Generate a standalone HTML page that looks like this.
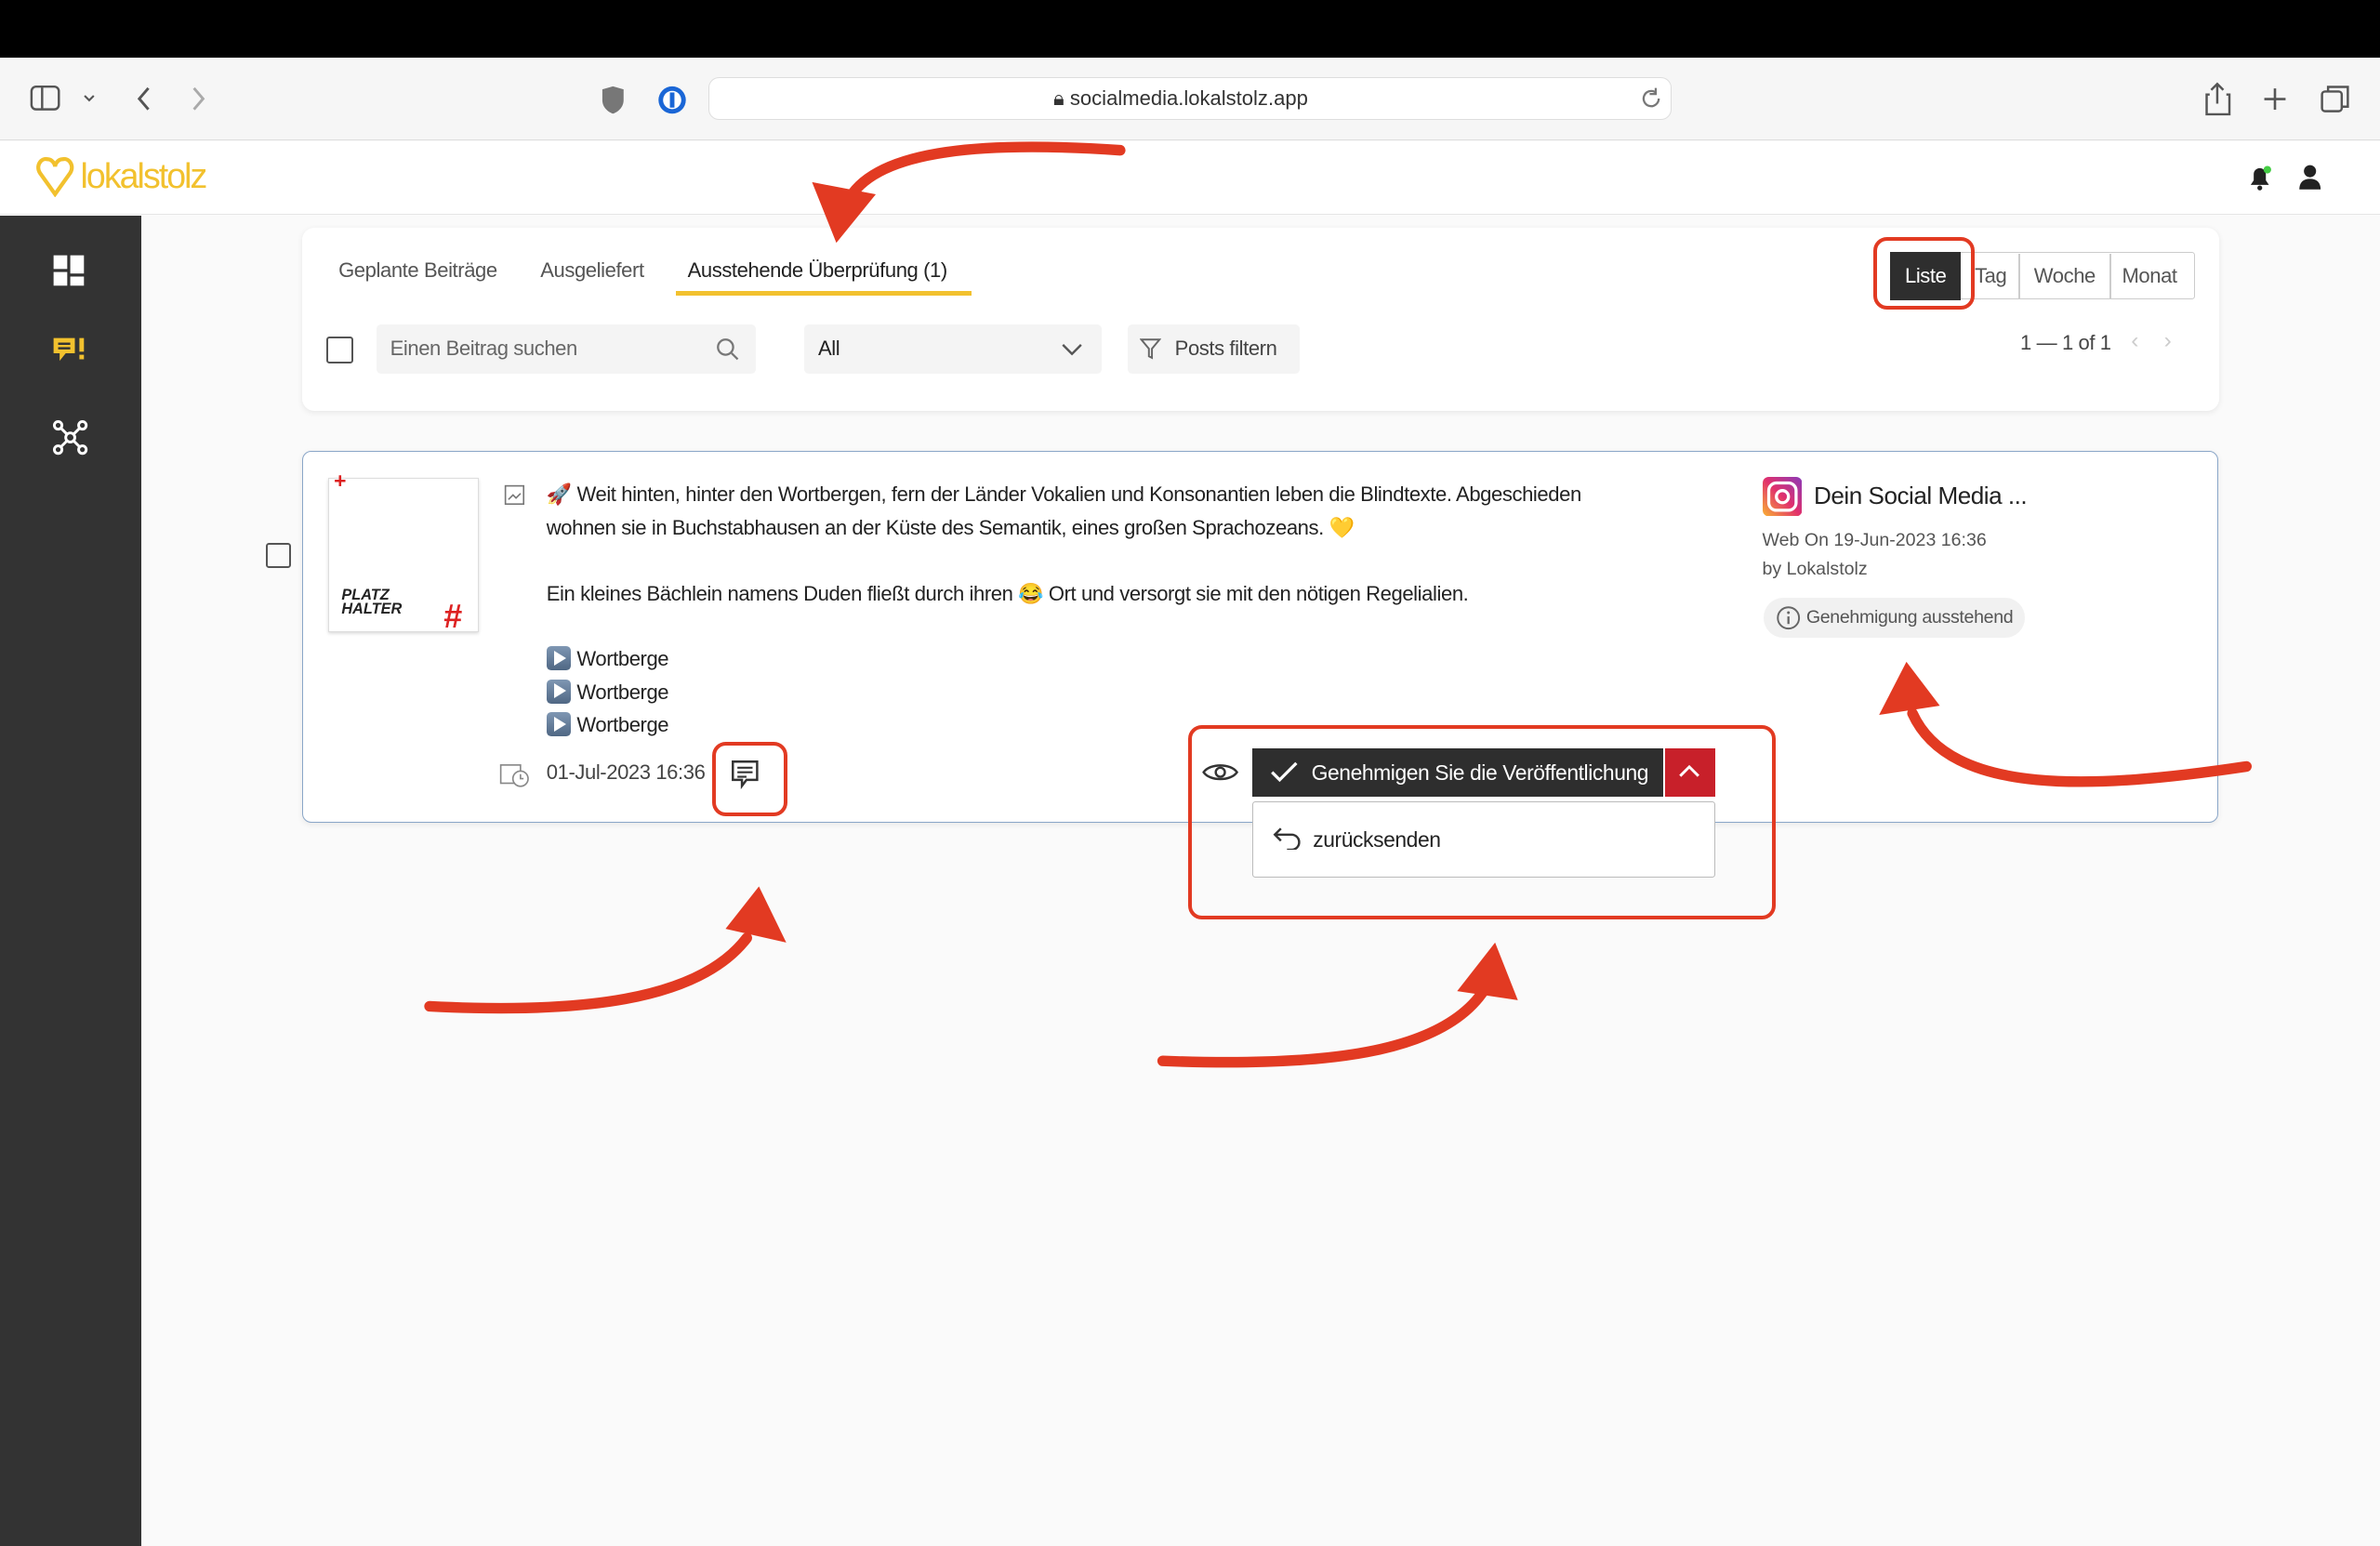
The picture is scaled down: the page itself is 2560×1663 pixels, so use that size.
<!DOCTYPE html>
<html><head><meta charset="utf-8"><style>
html,body{margin:0;padding:0;width:2560px;height:1663px;overflow:hidden;background:#fafafa}
#w{zoom:1.63265;width:1568px;height:1019px;position:relative;font-family:"Liberation Sans",sans-serif;color:#333}
.a{position:absolute}
.t{font-size:13.5px;letter-spacing:-0.25px}
.rb{position:absolute;border:2.5px solid #e23a22;border-radius:9px}
.pl{display:inline-block;width:16px;height:16px;background:linear-gradient(#7f97b3,#4f6784);border-radius:3px;vertical-align:-3px;margin-right:4px;position:relative}
.pl:after{content:"";position:absolute;left:5px;top:3px;border-left:8px solid #fff;border-top:5px solid transparent;border-bottom:5px solid transparent}
</style></head><body><div id="w">
<div class="a" style="left:0;top:0;width:1568px;height:38px;background:#000"></div>
<div class="a" style="left:0;top:38px;width:1568px;height:54px;background:#f6f6f6;border-bottom:1px solid #ddd"></div>
<svg class="a" style="left:18px;top:52px" width="130" height="26"><rect x="3" y="5" width="18" height="15" rx="3" fill="none" stroke="#555" stroke-width="1.5"/><line x1="10" y1="5" x2="10" y2="20" stroke="#555" stroke-width="1.5"/><path d="M38 11l3 3 3-3" fill="none" stroke="#555" stroke-width="1.3"/><path d="M80 6l-6 7 6 7" fill="none" stroke="#555" stroke-width="1.8"/><path d="M110 6l6 7-6 7" fill="none" stroke="#aaa" stroke-width="1.8"/></svg>
<svg class="a" style="left:394px;top:54px" width="60" height="24"><path d="M10 3l7 2v7c0 5-4 8-7 9-3-1-7-4-7-9V5z" fill="#777"/><circle cx="49" cy="12" r="9" fill="#1a66d6"/><circle cx="49" cy="12" r="6" fill="#fff"/><rect x="47.5" y="7" width="3" height="10" fill="#1a66d6"/></svg>
<div class="a" style="left:467px;top:51px;width:633px;height:27px;background:#fff;border:1px solid #ddd;border-radius:7px"></div>
<div class="a" style="left:694px;top:57px;font-size:13.5px;color:#333">🔒︎ socialmedia.lokalstolz.app</div>
<svg class="a" style="left:1080px;top:57px" width="16" height="16"><path d="M13 8a5 5 0 1 1-2-4" fill="none" stroke="#777" stroke-width="1.4"/><path d="M11 1v4h-4" fill="none" stroke="#777" stroke-width="1.4"/></svg>
<svg class="a" style="left:1450px;top:53px" width="105" height="24"><path d="M6 9h-2v13h15V9h-2M11 2v13M7 6l4-4 4 4" fill="none" stroke="#555" stroke-width="1.5"/><path d="M49 5v14M42 12h14" stroke="#555" stroke-width="1.6"/><rect x="80" y="7" width="13" height="13" rx="2" fill="none" stroke="#555" stroke-width="1.5"/><path d="M84 7V4h13v13h-4" fill="none" stroke="#555" stroke-width="1.5"/></svg>
<div class="a" style="left:0;top:93px;width:1568px;height:48px;background:#fff;border-bottom:1px solid #e5e5e5"></div>
<svg class="a" style="left:23px;top:103px" width="28" height="27"><path d="M13 25L3 11C0 6 4 1 8 2c3 0 5 3 5 5 0-2 2-5 5-5 4-1 8 4 5 9z" fill="none" stroke="#f2c12e" stroke-width="2.6"/></svg>
<div class="a" style="left:53px;top:103px;font-size:23px;color:#f2c12e;letter-spacing:-1.2px">lokalstolz</div>
<svg class="a" style="left:1480px;top:108px" width="18" height="18"><path d="M3 14h12l-2-3V7a4 4 0 0 0-8 0v4z" fill="#222"/><circle cx="9" cy="16" r="1.6" fill="#222"/><circle cx="14" cy="4" r="2.5" fill="#4c4"/></svg>
<svg class="a" style="left:1513px;top:108px" width="18" height="18"><circle cx="9" cy="5" r="4" fill="#222"/><path d="M2 17c0-5 3-7 7-7s7 2 7 7z" fill="#222"/></svg>
<div class="a" style="left:0;top:142px;width:93px;height:877px;background:#333"></div>
<svg class="a" style="left:34px;top:167px" width="24" height="24"><rect x="1" y="1" width="9" height="9" fill="#fff"/><rect x="12" y="1" width="9" height="12" fill="#fff"/><rect x="1" y="12" width="9" height="9" fill="#fff"/><rect x="12" y="15" width="9" height="6" fill="#fff"/></svg>
<svg class="a" style="left:34px;top:222px" width="24" height="20"><path d="M1 1h14v10H9l-4 5v-5H1z" fill="#f2c12e"/><rect x="4" y="4" width="8" height="1.5" fill="#333"/><rect x="4" y="7" width="8" height="1.5" fill="#333"/><rect x="18" y="1" width="3" height="9" fill="#f2c12e"/><rect x="18" y="12" width="3" height="3" fill="#f2c12e"/></svg>
<svg class="a" style="left:34px;top:276px" width="24" height="24"><g stroke="#fff" stroke-width="1.8" fill="none"><circle cx="12" cy="12" r="3"/><circle cx="4" cy="4" r="2.5"/><circle cx="20" cy="4" r="2.5"/><circle cx="4" cy="20" r="2.5"/><circle cx="20" cy="20" r="2.5"/><path d="M6 6l4 4M18 6l-4 4M6 18l4-4M18 18l-4-4"/></g></svg>
<div class="a" style="left:199px;top:150px;width:1263px;height:121px;background:#fff;border-radius:8px;box-shadow:0 1px 4px rgba(0,0,0,.08)"></div>
<div class="a t" style="left:223px;top:170px;color:#555">Geplante Beiträge</div>
<div class="a t" style="left:356px;top:170px;color:#555">Ausgeliefert</div>
<div class="a t" style="left:453px;top:170px;color:#222">Ausstehende Überprüfung (1)</div>
<div class="a" style="left:445px;top:192px;width:195px;height:3px;background:#f2c12e"></div>
<div class="a" style="left:215px;top:222px;width:15px;height:15px;border:1.5px solid #555;border-radius:2px"></div>
<div class="a" style="left:248px;top:214px;width:250px;height:32px;background:#f4f4f4;border-radius:3px"></div>
<div class="a t" style="left:257px;top:222px;color:#666">Einen Beitrag suchen</div>
<svg class="a" style="left:471px;top:222px" width="16" height="16"><circle cx="7" cy="7" r="5" fill="none" stroke="#777" stroke-width="1.4"/><path d="M11 11l4 4" stroke="#777" stroke-width="1.4"/></svg>
<div class="a" style="left:530px;top:214px;width:196px;height:32px;background:#f4f4f4;border-radius:3px"></div>
<div class="a t" style="left:539px;top:222px;color:#222">All</div>
<svg class="a" style="left:698px;top:224px" width="16" height="12"><path d="M2 3l6 6 6-6" fill="none" stroke="#555" stroke-width="1.5"/></svg>
<div class="a" style="left:743px;top:214px;width:113px;height:32px;background:#f4f4f4;border-radius:3px"></div>
<svg class="a" style="left:751px;top:222px" width="14" height="16"><path d="M1 2h12l-5 6v6l-2-1V8z" fill="none" stroke="#666" stroke-width="1.2"/></svg>
<div class="a t" style="left:774px;top:222px;color:#444">Posts filtern</div>
<div class="a" style="left:1245px;top:166px;width:200px;height:30px;border:1px solid #ccc;border-radius:2px;background:#fff"></div>
<div class="a" style="left:1245px;top:166px;width:47px;height:32px;background:#2e2e2e"></div>
<div class="a t" style="left:1255px;top:174px;color:#fff">Liste</div>
<div class="a t" style="left:1301px;top:174px;color:#555">Tag</div>
<div class="a" style="left:1330px;top:167px;width:1px;height:30px;background:#ccc"></div>
<div class="a t" style="left:1340px;top:174px;color:#555">Woche</div>
<div class="a" style="left:1390px;top:167px;width:1px;height:30px;background:#ccc"></div>
<div class="a t" style="left:1398px;top:174px;color:#555">Monat</div>
<div class="rb" style="left:1234px;top:156px;width:62px;height:43px"></div>
<div class="a t" style="left:1331px;top:218px;color:#444">1 — 1 of 1</div>
<div class="a" style="left:1404px;top:216px;color:#ccc;font-size:15px">‹&nbsp;&nbsp;&nbsp;&nbsp;›</div>
<div class="a" style="left:199px;top:297px;width:1261px;height:244px;background:#fff;border:1px solid #8aa6c8;border-radius:6px;box-shadow:0 1px 4px rgba(0,0,0,.08)"></div>
<div class="a" style="left:175px;top:358px;width:14px;height:14px;border:1.5px solid #555;border-radius:2px"></div>
<div class="a" style="left:216px;top:315px;width:98px;height:100px;background:#fff;border:1px solid #ddd;box-shadow:0 1px 2px rgba(0,0,0,.15)"></div>
<div class="a" style="left:220px;top:309px;color:#d22;font-size:14px;font-weight:bold">+</div>
<div class="a" style="left:225px;top:388px;font-size:10px;font-weight:bold;font-style:italic;line-height:9px;color:#222">PLATZ<br>HALTER</div>
<div class="a" style="left:292px;top:393px;font-size:22px;font-weight:bold;font-style:italic;color:#d22">#</div>
<svg class="a" style="left:332px;top:319px" width="14" height="14"><rect x="1" y="1" width="12" height="12" fill="none" stroke="#777"/><path d="M3 10l3-3 2 2 3-3" fill="none" stroke="#777"/></svg>
<div class="a t" style="left:360px;top:315px;width:722px;line-height:21.7px;color:#222">🚀 Weit hinten, hinter den Wortbergen, fern der Länder Vokalien und Konsonantien leben die Blindtexte. Abgeschieden wohnen sie in Buchstabhausen an der Küste des Semantik, eines großen Sprachozeans. 💛<br><br>Ein kleines Bächlein namens Duden fließt durch ihren 😂 Ort und versorgt sie mit den nötigen Regelialien.<br><br><span class="pl"></span>Wortberge<br><span class="pl"></span>Wortberge<br><span class="pl"></span>Wortberge</div>
<svg class="a" style="left:329px;top:501px" width="20" height="18"><rect x="1" y="3" width="13" height="12" fill="none" stroke="#888"/><circle cx="14" cy="12" r="5" fill="#fff" stroke="#888"/><path d="M14 9v3h2" fill="none" stroke="#888"/></svg>
<div class="a t" style="left:360px;top:501px;color:#444">01-Jul-2023 16:36</div>
<svg class="a" style="left:481px;top:500px" width="20" height="20"><path d="M2 2h16v12h-7l-3 4v-4H2z" fill="none" stroke="#333" stroke-width="1.5"/><path d="M5 6h10M5 9h10M5 12h6" stroke="#333" stroke-width="1.3"/></svg>
<div class="rb" style="left:469px;top:489px;width:45px;height:44px"></div>
<svg class="a" style="left:1161px;top:314px" width="26" height="26"><defs><linearGradient id="g" x1="0" y1="1" x2="1" y2="0"><stop offset="0" stop-color="#f9b233"/><stop offset=".5" stop-color="#e1306c"/><stop offset="1" stop-color="#8a3ab9"/></linearGradient></defs><rect width="26" height="26" rx="4" fill="url(#g)"/><rect x="4" y="4" width="18" height="18" rx="5" fill="none" stroke="#fff" stroke-width="2"/><circle cx="13" cy="13" r="4" fill="none" stroke="#fff" stroke-width="2"/></svg>
<div class="a" style="left:1195px;top:317px;font-size:16px;color:#222;letter-spacing:-0.3px">Dein Social Media ...</div>
<div class="a" style="left:1161px;top:349px;font-size:12px;color:#555">Web On 19-Jun-2023 16:36</div>
<div class="a" style="left:1161px;top:368px;font-size:12px;color:#555">by Lokalstolz</div>
<div class="a" style="left:1162px;top:394px;width:172px;height:26px;background:#f1f1f1;border-radius:13px"></div>
<svg class="a" style="left:1169px;top:398px" width="18" height="18"><circle cx="9" cy="9" r="7" fill="none" stroke="#666" stroke-width="1.2"/><path d="M9 8v5" stroke="#666" stroke-width="1.4"/><circle cx="9" cy="5.5" r="0.9" fill="#666"/></svg>
<div class="a" style="left:1190px;top:400px;font-size:12px;color:#555;letter-spacing:-0.2px">Genehmigung ausstehend</div>
<svg class="a" style="left:792px;top:500px" width="24" height="18"><path d="M1 9c4-6 18-6 22 0-4 6-18 6-22 0z" fill="none" stroke="#333" stroke-width="1.5"/><circle cx="12" cy="9" r="3" fill="none" stroke="#333" stroke-width="1.5"/></svg>
<div class="a" style="left:825px;top:493px;width:271px;height:32px;background:#2e2e2e"></div>
<svg class="a" style="left:836px;top:500px" width="20" height="18"><path d="M2 9l5 5 11-11" fill="none" stroke="#fff" stroke-width="2"/></svg>
<div class="a t" style="left:864px;top:501px;color:#fff;font-size:14px">Genehmigen Sie die Veröffentlichung</div>
<div class="a" style="left:1097px;top:493px;width:33px;height:32px;background:#c8202a"></div>
<svg class="a" style="left:1105px;top:502px" width="16" height="12"><path d="M2 9l6-6 6 6" fill="none" stroke="#fff" stroke-width="1.8"/></svg>
<div class="a" style="left:825px;top:528px;width:304px;height:49px;background:#fff;border:1px solid #bbb;border-radius:2px"></div>
<svg class="a" style="left:838px;top:544px" width="20" height="16"><path d="M6 2L2 6l4 4M2 6h11a5 5 0 0 1 0 10h-3" fill="none" stroke="#333" stroke-width="1.5"/></svg>
<div class="a t" style="left:865px;top:545px;color:#222;font-size:14px">zurücksenden</div>
<div class="rb" style="left:783px;top:478px;width:382px;height:123px"></div>
<svg class="a" style="left:0;top:0" width="1568" height="1019"><g fill="none" stroke="#e23a22" stroke-width="7" stroke-linecap="round"><path d="M738 99C650 93 580 98 560 130"/><path d="M283 663C380 668 460 660 492 618"/><path d="M766 699C870 703 950 695 978 652"/><path d="M1480 505C1380 520 1285 525 1260 470"/></g><g fill="#e23a22"><path d="M535 120L577 128L551 160Z"/><path d="M478 612L518 621L500 584Z"/><path d="M960 653L1000 659L985 621Z"/><path d="M1238 471L1278 465L1256 436Z"/></g></svg>
</div></body></html>
